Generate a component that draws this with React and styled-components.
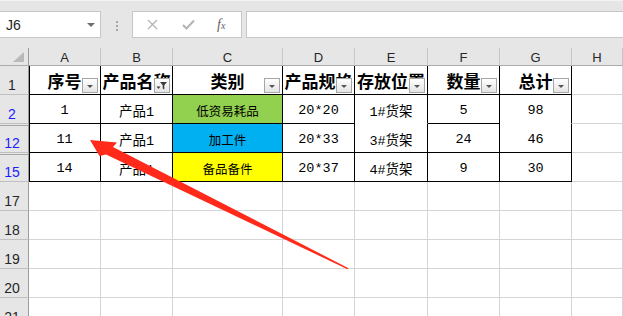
import React from "react";
import styled, { createGlobalStyle } from "styled-components";

const GlobalStyle = createGlobalStyle`
    body {
        margin: 0;
        background: #ffffff;
        overflow: hidden;
    }
`;

const Page = styled.div`
    position: relative;
    width: 623px;
    height: 316px;
    overflow: hidden;
    font-family: "Liberation Sans", Arial, sans-serif;
    background: #ffffff;
`;

const Toolbar = styled.div`
    height: 48px;
    box-sizing: border-box;
    padding-top: 11px;
    display: flex;
    align-items: flex-start;
    background: #e6e6e6;
    border-top: 1px solid #f3f3f3;
`;

const NameBox = styled.div`
    width: 101px;
    height: 27px;
    box-sizing: border-box;
    margin-top: -1px;
    display: flex;
    align-items: center;
    justify-content: space-between;
    padding: 0 5px 0 6px;
    background: #ffffff;
    border: 1px solid #c6c6c6;
    border-left: none;
    font-size: 14px;
    color: #262626;
`;

const Caret = styled.span`
    width: 0;
    height: 0;
    border-left: 4px solid transparent;
    border-right: 4px solid transparent;
    border-top: 4px solid #6e6e6e;
`;

const Dots = styled.div`
    width: 31px;
    height: 27px;
    display: flex;
    flex-direction: column;
    align-items: center;
    justify-content: center;
    gap: 2px;

    span {
        width: 2px;
        height: 2px;
        background: #a6a6a6;
    }
`;

const FormulaButtons = styled.div`
    width: 110px;
    height: 27px;
    box-sizing: border-box;
    margin-top: -1px;
    display: flex;
    align-items: center;
    padding-left: 14px;
    gap: 24px;
    background: #ffffff;
    border: 1px solid #c6c6c6;
`;

const Fx = styled.span`
    font-family: "Liberation Serif", serif;
    font-style: italic;
    font-size: 14px;
    color: #5f5f5f;
    margin-left: -2px;

    small {
        font-size: 10px;
    }
`;

const FormulaInput = styled.div`
    flex: 1;
    height: 27px;
    box-sizing: border-box;
    margin: -1px -2px 0 4px;
    background: #ffffff;
    border: 1px solid #c6c6c6;
`;

const Sheet = styled.div`
    display: grid;
    grid-template-columns: 29px 72px 72px 110px 72px 73px 72px 72px 1fr;
    grid-template-rows: 18px;
    grid-auto-rows: 29px;
`;

const Corner = styled.div`
    position: relative;
    background: #e6e6e6;
    border-right: 1px solid #9b9b9b;
    border-bottom: 1px solid #ababab;

    &::after {
        content: "";
        position: absolute;
        right: 4px;
        bottom: 3px;
        border-left: 11px solid transparent;
        border-bottom: 10px solid #b9b9b9;
    }
`;

const ColHead = styled.div`
    box-sizing: border-box;
    display: flex;
    align-items: center;
    justify-content: center;
    padding-top: 2px;
    background: #e6e6e6;
    border-right: 1px solid #c6c6c6;
    border-bottom: 1px solid #ababab;
    font-size: 13px;
    color: #262626;
    background-clip: padding-box;
    box-shadow: inset 0 1px 0 #e6e6e6;
`;

const RowHead = styled.div`
    box-sizing: border-box;
    display: flex;
    align-items: flex-end;
    justify-content: center;
    padding: 0 4px 1px 0;
    background: #e6e6e6;
    border-right: 1px solid #9b9b9b;
    border-bottom: 1px solid #c0c0c0;
    font-size: 14px;
    line-height: 16px;
    color: ${(p) => (p.$filtered ? "#1b1bff" : "#262626")};
    box-shadow: ${(p) =>
        p.$gapAbove ? "inset 0 1px 0 #e6e6e6, inset 0 2px 0 #a6a6a6" : "none"};
`;

const Cell = styled.div`
    position: relative;
    box-sizing: border-box;
    min-width: 0;
    overflow: hidden;
    display: flex;
    align-items: center;
    justify-content: center;
    white-space: nowrap;
    background: ${(p) => p.$bg || "#ffffff"};
    border-right: 1px solid ${(p) => (p.$boxed ? "#000000" : "#d4d4d4")};
    border-bottom: 1px solid
        ${(p) => (p.$open ? "#ffffff" : p.$boxed ? "#000000" : "#d4d4d4")};
    box-shadow: ${(p) => (p.$first ? "inset 1px 0 0 #000000" : "none")};
    color: #000000;
`;

const HeadText = styled.span`
    font-family: "Noto Sans CJK SC", sans-serif;
    font-weight: 700;
    font-size: 17px;
    line-height: 20px;
    margin-top: 2px;
`;

const DataText = styled.span`
    font-family: "Liberation Mono", "Noto Sans CJK SC", monospace;
    font-size: ${(p) => (p.$small ? "12.5px" : "13.5px")};
    margin-top: 2px;
`;

const FilterButton = styled.div`
    position: absolute;
    right: 2px;
    bottom: 1px;
    width: 16px;
    height: 15px;
    box-sizing: border-box;
    display: flex;
    align-items: center;
    justify-content: center;
    background: linear-gradient(#ffffff, #e4e4e4);
    border: 1px solid #a6a6a6;
`;

const DownTriangle = styled.span`
    width: 0;
    height: 0;
    margin-top: 2px;
    border-left: 3px solid transparent;
    border-right: 3px solid transparent;
    border-top: 3px solid #555555;
`;

const ArrowLayer = styled.svg`
    position: absolute;
    left: 0;
    top: 0;
    pointer-events: none;
`;

const columns = ["A", "B", "C", "D", "E", "F", "G", "H"];

const headers = ["序号", "产品名称", "类别", "产品规格", "存放位置", "数量", "总计"];

const dataRows = [
    {
        num: "2",
        cells: ["1", "产品1", "低资易耗品", "20*20", "1#货架", "5", "98"],
        bg: "#92d050",
        open: [4, 6],
    },
    {
        num: "12",
        cells: ["11", "产品1", "加工件", "20*33", "3#货架", "24", "46"],
        bg: "#00b0f0",
        gapAbove: true,
    },
    {
        num: "15",
        cells: ["14", "产品1", "备品备件", "20*37", "4#货架", "9", "30"],
        bg: "#ffff00",
        gapAbove: true,
    },
];

const emptyRows = ["17", "18", "19", "20", "21"];

const FunnelIcon = () => (
    <svg width="12" height="11" viewBox="0 0 12 11">
        <path d="M4 2h7L8.3 5.2V9.5L6.7 8.6V5.2Z" fill="#3c3c3c" />
        <path d="M0.5 6.5h4L2.5 9Z" fill="#3c3c3c" />
    </svg>
);

const App = () => {
    return (
        <>
            <GlobalStyle />
            <Page>
                <Toolbar>
                    <NameBox>
                        J6
                        <Caret />
                    </NameBox>
                    <Dots>
                        <span />
                        <span />
                        <span />
                    </Dots>
                    <FormulaButtons>
                        <svg width="11" height="11" viewBox="0 0 11 11">
                            <path d="M1 1L10 10M10 1L1 10" stroke="#b4b4b4" strokeWidth="1.3" />
                        </svg>
                        <svg width="13" height="11" viewBox="0 0 13 11">
                            <path d="M1 6L4.5 9.5L12 1.5" stroke="#b4b4b4" strokeWidth="2" fill="none" />
                        </svg>
                        <Fx>
                            f<small>x</small>
                        </Fx>
                    </FormulaButtons>
                    <FormulaInput />
                </Toolbar>

                <Sheet>
                    <Corner />
                    {columns.map((c) => (
                        <ColHead key={c}>{c}</ColHead>
                    ))}

                    <RowHead>1</RowHead>
                    {headers.map((h, i) => (
                        <Cell key={h} $boxed $first={i === 0}>
                            <HeadText>{h}</HeadText>
                            <FilterButton>
                                {i === 1 ? <FunnelIcon /> : <DownTriangle />}
                            </FilterButton>
                        </Cell>
                    ))}
                    <Cell />

                    {dataRows.map((row) => (
                        <React.Fragment key={row.num}>
                            <RowHead $filtered $gapAbove={row.gapAbove}>
                                {row.num}
                            </RowHead>
                            {row.cells.map((v, i) => (
                                <Cell
                                    key={i}
                                    $boxed
                                    $first={i === 0}
                                    $bg={i === 2 ? row.bg : null}
                                    $open={row.open && row.open.includes(i)}
                                >
                                    <DataText $small={i === 2}>{v}</DataText>
                                </Cell>
                            ))}
                            <Cell />
                        </React.Fragment>
                    ))}

                    {emptyRows.map((n) => (
                        <React.Fragment key={n}>
                            <RowHead>{n}</RowHead>
                            {columns.map((c) => (
                                <Cell key={c} />
                            ))}
                        </React.Fragment>
                    ))}
                </Sheet>

                <ArrowLayer width="623" height="316" viewBox="0 0 623 316">
                    <polygon
                        points="90,140 117,142.5 113,147 348.5,268.2 347.5,269.2 106,154.5 99.5,156"
                        fill="#ff2a1a"
                    />
                </ArrowLayer>
            </Page>
        </>
    );
};

export default App;
